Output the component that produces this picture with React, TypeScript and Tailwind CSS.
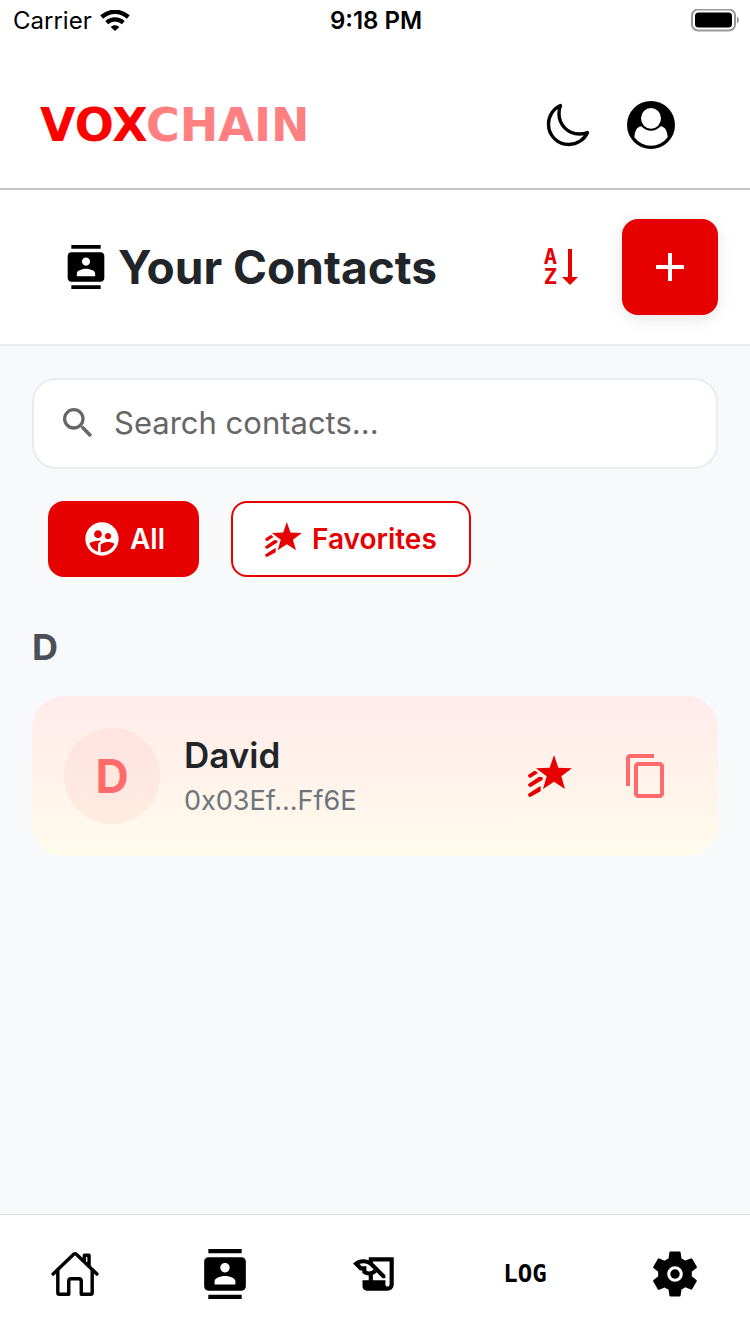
import { useState } from "react";
import {
  MdAdd,
  MdContacts,
  MdContentCopy,
  MdHistoryEdu,
  MdSearch,
  MdSupervisedUserCircle,
} from "react-icons/md";
import { IoHomeOutline, IoMoonOutline, IoSettingsSharp } from "react-icons/io5";

function WifiIcon() {
  return (
    <svg viewBox="0 0 90 66" className="h-[22px] w-[30px]" fill="none" stroke="#000" aria-hidden="true">
      <path d="M5 21C29 0 61 0 85 21" strokeWidth="13" />
      <path d="M20 38C35 25 55 25 70 38" strokeWidth="13" />
      <path d="M32 51C40 44 50 44 58 51L45 63Z" fill="#000" stroke="none" />
    </svg>
  );
}

function BatteryIcon() {
  return (
    <svg viewBox="0 0 48 24" className="h-6 w-12" aria-label="Battery full" role="img">
      <rect x="1" y="0.500" width="43" height="21" rx="6" fill="none" stroke="#999" strokeWidth="2" />
      <rect x="4" y="3.500" width="37" height="15" rx="3.5" fill="#000" />
      <path d="M46 7.500C48.400 8.500 48.400 13.500 46 14.500Z" fill="#999" />
    </svg>
  );
}

function UserIcon() {
  return (
    <svg viewBox="0 0 144 144" className="size-12" aria-hidden="true">
      <circle cx="72" cy="72" r="72" fill="#000" />
      <path d="M22 109C23 89 31 77 43 76H101C113 77 121 89 122 109A62 62 0 0 1 22 109Z" fill="#fff" />
      <circle cx="72" cy="51" r="38" fill="#000" />
      <ellipse cx="72" cy="52" rx="30" ry="31" fill="#fff" />
    </svg>
  );
}

function ShootingStar({ className }: { className: string }) {
  return (
    <svg viewBox="0 0 132 126" className={className} fill="currentColor" aria-hidden="true">
      <path d="M78 0L91 38L132 40L100 64L111 102L78 80L45 102L56 64L24 40L65 38Z" />
      <path d="M0 60L18 48Q22 46 24 49L30 54L8 68Q0 70 0 60ZM0 88L33 65L44 67V74L8 96Q0 98 0 88ZM0 117L32 96L38 94V109L8 125Q0 128 0 117Z" />
    </svg>
  );
}

function SortArrow() {
  return (
    <svg viewBox="0 0 16 36" className="h-9 w-4" fill="currentColor" aria-hidden="true">
      <path d="M6 0H10V28H16L8 36L0 28H6Z" />
    </svg>
  );
}

function GearIcon() {
  return (
    <svg viewBox="0 0 50 50" className="size-[50px]" aria-hidden="true">
      <IoSettingsSharp size={50} />
      <circle cx="25" cy="25" r="4.7" fill="currentColor" />
    </svg>
  );
}

const contacts = [{ name: "David", address: "0x03Ef...Ff6E", favorite: true }];

export default function App() {
  const [query, setQuery] = useState("");
  const [onlyFavorites, setOnlyFavorites] = useState(false);
  const shown = contacts.filter(
    (c) => c.name.toLowerCase().includes(query.toLowerCase()) && (!onlyFavorites || c.favorite),
  );

  return (
    <div className="flex min-h-screen flex-col bg-[#f8f9fb] font-['Inter',sans-serif] text-[#212529]">
      <div className="grid h-10 grid-cols-3 items-center bg-white pt-0.5 pr-[11px] pl-[13px] text-2xl text-black">
        <div className="flex items-center gap-2">
          <span>Carrier</span>
          <WifiIcon />
        </div>
        <div className="text-center font-semibold">9:18 PM</div>
        <div className="flex justify-end">
          <BatteryIcon />
        </div>
      </div>

      <header className="flex h-[150px] items-center justify-between border-b-2 border-[#c8c8c8] bg-white pt-[22px] pr-[75px] pl-10">
        <a href="#home" className="font-['DejaVu_Sans',sans-serif] text-[46px] leading-none font-bold text-[#ff0000]">
          VOX<span className="text-[#ff8080]">CHAIN</span>
        </a>
        <div className="flex items-center gap-[35px] text-black">
          <button type="button" aria-label="Dark mode">
            <IoMoonOutline className="size-12 [&_path]:stroke-[36px]" />
          </button>
          <button type="button" aria-label="Profile">
            <UserIcon />
          </button>
        </div>
      </header>

      <section className="flex h-[156px] items-center justify-between border-b-2 border-[#e9ecef] bg-white pr-8 pl-16">
        <h1 className="flex items-center gap-2.5 text-[46px] leading-none font-bold">
          <MdContacts className="size-11 text-black" />
          Your Contacts
        </h1>
        <div className="flex items-center gap-11 text-[#e60000]">
          <button type="button" aria-label="Sort A to Z" className="flex items-center gap-[5px]">
            <span className="flex flex-col font-['DejaVu_Sans_Mono',monospace] text-[22px] leading-5 font-bold">
              <span>A</span>
              <span>Z</span>
            </span>
            <SortArrow />
          </button>
          <button
            type="button"
            aria-label="Add contact"
            className="flex size-24 items-center justify-center rounded-2xl bg-[#e60000] text-white shadow-[0_4px_16px_rgba(0,0,0,0.1)]"
          >
            <MdAdd className="size-12" />
          </button>
        </div>
      </section>

      <main className="flex flex-1 flex-col px-8 pt-8">
        <label className="flex h-[91px] items-center gap-4 rounded-3xl border-2 border-[#e9ecef] bg-white px-6 pb-0.5 text-[#666]">
          <MdSearch className="size-10" aria-hidden="true" />
          <input
            type="text"
            aria-label="Search contacts"
            placeholder="Search contacts..."
            value={query}
            onChange={(e) => setQuery(e.target.value)}
            className="min-w-0 flex-1 bg-transparent text-[31px] leading-10 outline-none placeholder:text-[#666]"
          />
        </label>

        <div className="mt-8 flex gap-8 px-4 text-[28px] font-semibold">
          <button
            type="button"
            aria-pressed={!onlyFavorites}
            onClick={() => setOnlyFavorites(false)}
            className="flex h-[76px] items-center gap-2 rounded-2xl border-2 border-[#e60000] bg-[#e60000] px-8 text-white"
          >
            <MdSupervisedUserCircle className="size-10" />
            All
          </button>
          <button
            type="button"
            aria-pressed={onlyFavorites}
            onClick={() => setOnlyFavorites(true)}
            className="flex h-[76px] items-center gap-2.5 rounded-2xl border-2 border-[#e60000] bg-white px-8 text-[#e60000]"
          >
            <ShootingStar className="h-[35px] w-[37px]" />
            Favorites
          </button>
        </div>

        <h2 className="mt-[50px] text-4xl leading-[41px] font-bold text-[#495057]">D</h2>

        <ul className="mt-7">
          {shown.map((c) => (
            <li
              key={c.name}
              className="flex h-40 items-center rounded-4xl bg-linear-to-b from-[#ffebeb] to-[#fffbeb] pr-12 pl-8"
            >
              <div className="flex size-24 items-center justify-center rounded-full bg-[#ff6b6b]/8 text-[46px] font-bold text-[#ff6b6b]">
                {c.name[0]}
              </div>
              <div className="ml-6 flex-1 pt-1">
                <div className="text-[35px] leading-[46px] font-semibold">{c.name}</div>
                <div className="text-[27px] leading-[46px] text-[#6c757d]">{c.address}</div>
              </div>
              <div className="flex items-center gap-[50px]">
                <button type="button" aria-label="Toggle favorite" className="text-[#e60000]">
                  <ShootingStar className="h-[42px] w-11" />
                </button>
                <button type="button" aria-label="Copy address" className="text-[#ff6b6b]">
                  <MdContentCopy className="size-12" />
                </button>
              </div>
            </li>
          ))}
        </ul>
      </main>

      <nav className="grid h-[120px] grid-cols-5 border-t border-[#dee2e6] bg-white pb-0.5 text-black">
        <a href="#home" aria-label="Home" className="flex items-center justify-center">
          <IoHomeOutline className="size-[50px] [&_path]:stroke-[35px]" />
        </a>
        <a href="#contacts" aria-label="Contacts" className="flex items-center justify-center">
          <MdContacts className="size-[50px]" />
        </a>
        <a href="#history" aria-label="History" className="flex items-center justify-center">
          <MdHistoryEdu className="size-[50px]" />
        </a>
        <a
          href="#log"
          className="flex items-center justify-center font-['DejaVu_Sans_Mono',monospace] text-2xl font-bold"
        >
          LOG
        </a>
        <a href="#settings" aria-label="Settings" className="flex items-center justify-center">
          <GearIcon />
        </a>
      </nav>
    </div>
  );
}
